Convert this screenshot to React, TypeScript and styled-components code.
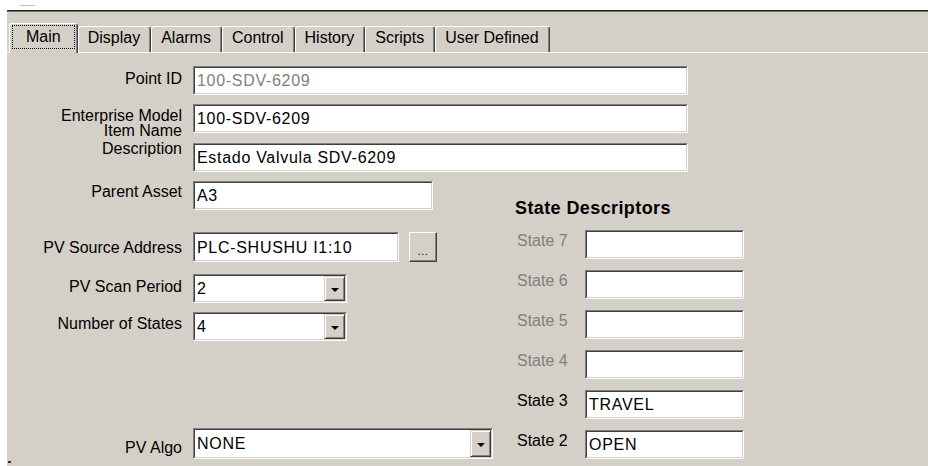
import React from "react";
import styled, { createGlobalStyle } from "styled-components";

const FACE = "#d4d0c8";
const SHADOW = "#808080";
const DARK = "#404040";
const HILITE = "#ffffff";
const MUTED = "#808080";

const GlobalStyle = createGlobalStyle`
  html, body {
    margin: 0;
    padding: 0;
    background: #ffffff;
    overflow: hidden;
  }
  body {
    font-family: "Liberation Sans", Arial, sans-serif;
    font-size: 16px;
    color: #000000;
  }
`;

const Window = styled.div`
  width: 928px;
  height: 466px;
  display: flex;
  flex-direction: column;
  overflow: hidden;
  background: #ffffff;
`;

const TitleStrip = styled.div`
  flex: none;
  height: 10px;
  display: flex;
  align-items: flex-start;
  padding-left: 20px;
`;

const TitleMark = styled.span`
  width: 15px;
  height: 1px;
  margin-top: 5px;
  background: #c6baba;
`;

const Sheet = styled.div`
  position: relative;
  flex: 1;
  margin-left: 7px;
  background: ${FACE};
  border-top: 1px solid #1f1f1f;
  box-shadow: inset 0 1px 0 #6e6e6e;
`;

const CornerMark = styled.span`
  position: absolute;
  left: 1px;
  bottom: 3px;
  width: 3px;
  height: 2px;
  background: #333333;
`;

/* ---------- tab strip ---------- */

const TabStrip = styled.div`
  box-sizing: border-box;
  height: 42px;
  display: flex;
  align-items: flex-end;
  padding-left: 2px;
  border-bottom: 1px solid ${HILITE};
`;

const Tab = styled.div<{ $active?: boolean }>`
  position: relative;
  z-index: ${(p) => (p.$active ? 1 : 0)};
  box-sizing: border-box;
  height: ${(p) => (p.$active ? 30 : 26)}px;
  margin-bottom: ${(p) => (p.$active ? -1 : 0)}px;
  padding: ${(p) => (p.$active ? "1px 2px 4px" : "0 10px 4px 9px")};
  display: flex;
  align-items: center;
  background: ${FACE};
  border-top: 1px solid ${HILITE};
  border-left: 1px solid ${HILITE};
  border-right: 1px solid ${DARK};
  border-radius: 3px 3px 0 0;
  box-shadow: inset -1px 0 0 ${SHADOW};
  font-size: 16px;
  line-height: 18px;
  white-space: nowrap;
`;

const FocusBox = styled.span`
  box-sizing: border-box;
  height: 24px;
  display: flex;
  align-items: center;
  padding: 0 13px;
  border: 1px dotted #000000;
`;

/* ---------- form ---------- */

const Body = styled.div`
  display: flex;
  flex-direction: column;
  padding-top: 13px;
`;

const Row = styled.div<{ $gap: number; $h?: number }>`
  display: flex;
  align-items: flex-start;
  height: ${(p) => p.$h ?? 29}px;
  margin-top: ${(p) => p.$gap}px;
`;

const Label = styled.div<{
  $dy: number;
  $w?: number;
  $left?: boolean;
  $muted?: boolean;
}>`
  box-sizing: border-box;
  flex: none;
  width: ${(p) => p.$w ?? 175}px;
  margin-top: ${(p) => p.$dy}px;
  margin-right: ${(p) => (p.$left ? 0 : 11)}px;
  padding-left: ${(p) => (p.$left ? 2 : 0)}px;
  text-align: ${(p) => (p.$left ? "left" : "right")};
  font-size: 16px;
  line-height: 15px;
  white-space: nowrap;
  color: ${(p) => (p.$muted ? MUTED : "#000000")};
`;

const Sunken = styled.div<{ $w: number; $h?: number }>`
  box-sizing: border-box;
  flex: none;
  width: ${(p) => p.$w}px;
  height: ${(p) => p.$h ?? 29}px;
  display: flex;
  border: 1px solid;
  border-color: ${SHADOW} ${HILITE} ${HILITE} ${SHADOW};
`;

const Well = styled.div`
  flex: 1;
  min-width: 0;
  display: flex;
  align-items: center;
  border: 1px solid;
  border-color: ${DARK} ${FACE} ${FACE} ${DARK};
  background: #ffffff;
  padding-left: 2px;
`;

const Value = styled.span<{ $muted?: boolean }>`
  flex: 1;
  padding-top: 1px;
  font-size: 16px;
  line-height: 18px;
  letter-spacing: 0.7px;
  white-space: nowrap;
  overflow: hidden;
  color: ${(p) => (p.$muted ? MUTED : "#000000")};
`;

const DropButton = styled.div`
  box-sizing: border-box;
  flex: none;
  width: 21px;
  align-self: stretch;
  display: flex;
  align-items: center;
  justify-content: center;
  padding-top: 2px;
  background: ${FACE};
  border: 1px solid;
  border-color: ${FACE} ${DARK} ${DARK} ${FACE};
  box-shadow: inset 1px 1px 0 ${HILITE}, inset -1px -1px 0 ${SHADOW};
`;

const Arrow = styled.span`
  width: 0;
  height: 0;
  border-left: 4px solid transparent;
  border-right: 4px solid transparent;
  border-top: 4px solid #000000;
`;

const BrowseButton = styled.div`
  box-sizing: border-box;
  flex: none;
  width: 28px;
  height: 30px;
  margin-left: 10px;
  display: flex;
  align-items: flex-end;
  justify-content: center;
  padding-bottom: 6px;
  background: ${FACE};
  border: 1px solid;
  border-color: ${HILITE} ${DARK} ${DARK} ${HILITE};
  box-shadow: inset -1px -1px 0 ${SHADOW};
  font-size: 11px;
  line-height: 8px;
  letter-spacing: 0.5px;
`;

const Split = styled.div`
  display: flex;
  margin-top: 9px;
`;

const LeftCol = styled.div`
  flex: none;
  width: 508px;
  display: flex;
  flex-direction: column;
`;

const RightCol = styled.div`
  display: flex;
  flex-direction: column;
`;

const GroupTitle = styled.div`
  margin-top: 17px;
  font-size: 18px;
  font-weight: 700;
  line-height: 20px;
  letter-spacing: 0.4px;
  white-space: nowrap;
`;

type TextProps = { w: number; h?: number; value?: string; muted?: boolean };

function TextBox({ w, h, value = "", muted }: TextProps) {
  return (
    <Sunken $w={w} $h={h}>
      <Well>
        <Value $muted={muted}>{value}</Value>
      </Well>
    </Sunken>
  );
}

function ComboBox({ w, h, value = "" }: TextProps) {
  return (
    <Sunken $w={w} $h={h}>
      <Well>
        <Value>{value}</Value>
        <DropButton>
          <Arrow />
        </DropButton>
      </Well>
    </Sunken>
  );
}

const tabs = ["Main", "Display", "Alarms", "Control", "History", "Scripts", "User Defined"];

const states = [
  { name: "State 7", value: "", muted: true, gap: 12 },
  { name: "State 6", value: "", muted: true, gap: 11 },
  { name: "State 5", value: "", muted: true, gap: 11 },
  { name: "State 4", value: "", muted: true, gap: 11 },
  { name: "State 3", value: "TRAVEL", muted: false, gap: 11 },
  { name: "State 2", value: "OPEN", muted: false, gap: 11 },
];

export default function App() {
  return (
    <>
      <GlobalStyle />
      <Window>
        <TitleStrip>
          <TitleMark />
        </TitleStrip>
        <Sheet>
          <TabStrip>
            {tabs.map((t, i) =>
              i === 0 ? (
                <Tab key={t} $active>
                  <FocusBox>{t}</FocusBox>
                </Tab>
              ) : (
                <Tab key={t}>{t}</Tab>
              )
            )}
          </TabStrip>

          <Body>
            <Row $gap={0}>
              <Label $dy={5}>Point ID</Label>
              <TextBox w={495} value="100-SDV-6209" muted />
            </Row>
            <Row $gap={9}>
              <Label $dy={4}>
                Enterprise Model
                <br />
                Item Name
              </Label>
              <TextBox w={495} value="100-SDV-6209" />
            </Row>
            <Row $gap={10}>
              <Label $dy={-2}>Description</Label>
              <TextBox w={495} value="Estado Valvula SDV-6209" />
            </Row>

            <Split>
              <LeftCol>
                <Row $gap={0}>
                  <Label $dy={3}>Parent Asset</Label>
                  <TextBox w={240} value="A3" />
                </Row>
                <Row $gap={22} $h={30}>
                  <Label $dy={8}>PV Source Address</Label>
                  <TextBox w={206} h={30} value="PLC-SHUSHU I1:10" />
                  <BrowseButton>...</BrowseButton>
                </Row>
                <Row $gap={12}>
                  <Label $dy={5}>PV Scan Period</Label>
                  <ComboBox w={154} value="2" />
                </Row>
                <Row $gap={9}>
                  <Label $dy={4}>Number of States</Label>
                  <ComboBox w={154} value="4" />
                </Row>
                <Row $gap={87} $h={31}>
                  <Label $dy={12}>PV Algo</Label>
                  <ComboBox w={300} h={31} value="NONE" />
                </Row>
              </LeftCol>

              <RightCol>
                <GroupTitle>State Descriptors</GroupTitle>
                {states.map((s) => (
                  <Row key={s.name} $gap={s.gap}>
                    <Label $dy={3} $w={70} $left $muted={s.muted}>
                      {s.name}
                    </Label>
                    <TextBox w={159} value={s.value} />
                  </Row>
                ))}
              </RightCol>
            </Split>
          </Body>
          <CornerMark />
        </Sheet>
      </Window>
    </>
  );
}
